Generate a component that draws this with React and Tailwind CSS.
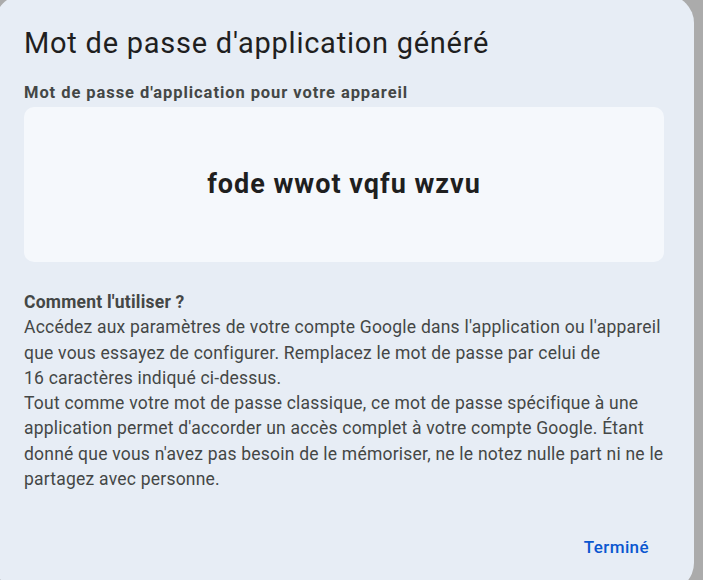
export default function App() {
  return (
    <div className="w-[703px] h-[580px] overflow-hidden bg-[#ababab]">
      <div className="-mt-[5px] -ml-[5px] w-[699px] h-[596px] rounded-[28px] bg-[#e7edf5] pl-[29px] pt-[30px] flex flex-col" style={{ fontFamily: 'Roboto, "Liberation Sans", sans-serif' }}>
        <h1 className="text-[29px] leading-[36px] text-[#1f1f1f] font-normal tracking-[0.75px]">Mot de passe d'application généré</h1>
        <div className="mt-[21px] text-[16.5px] leading-[22px] font-bold text-[#444746] tracking-[0.93px]">Mot de passe d'application pour votre appareil</div>
        <div className="mt-[3px] w-[640px] h-[155px] rounded-[10px] bg-[#f5f8fc] flex items-center justify-center">
          <span className="text-[27px] font-bold text-[#1f1f1f] tracking-[1px]">fode wwot vqfu wzvu</span>
        </div>
        <div className="mt-[28px] text-[17.5px] leading-[25.3px] text-[#444746] whitespace-nowrap tracking-[0.22px]">
          <div className="font-bold">Comment l'utiliser ?</div>
          <div>Accédez aux paramètres de votre compte Google dans l'application ou l'appareil</div>
          <div>que vous essayez de configurer. Remplacez le mot de passe par celui de</div>
          <div>16 caractères indiqué ci-dessus.</div>
          <div>Tout comme votre mot de passe classique, ce mot de passe spécifique à une</div>
          <div>application permet d'accorder un accès complet à votre compte Google. Étant</div>
          <div>donné que vous n'avez pas besoin de le mémoriser, ne le notez nulle part ni ne le</div>
          <div>partagez avec personne.</div>
        </div>
        <div className="mt-[43px] flex justify-end pr-[45px]">
          <button className="text-[17px] leading-[24px] font-medium text-[#0b57d0] tracking-[0.4px]">Terminé</button>
        </div>
      </div>
    </div>
  );
}
